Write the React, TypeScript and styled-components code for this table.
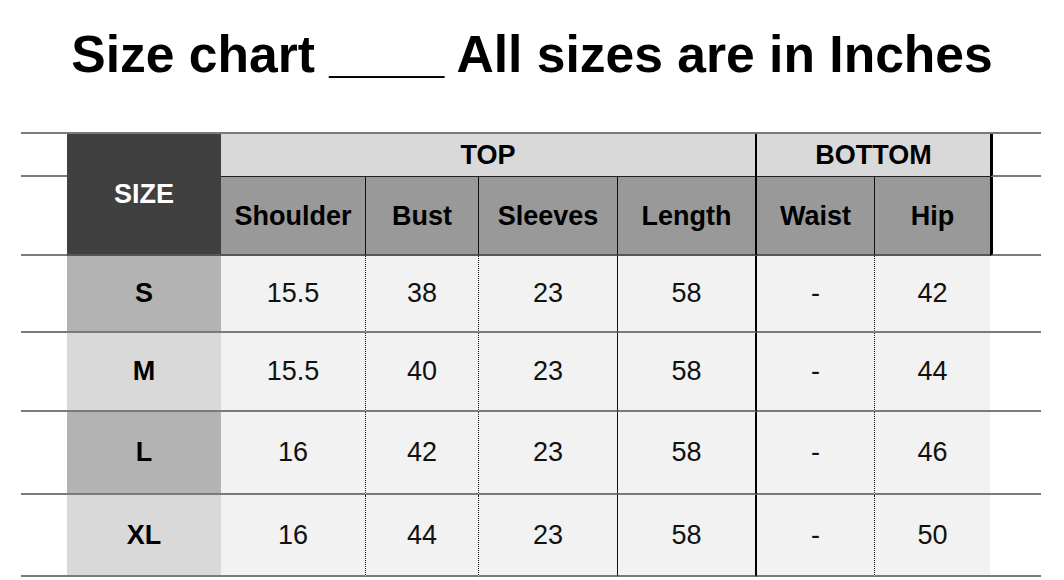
import * as React from "react";
import styled, { createGlobalStyle } from "styled-components";

const GlobalStyle = createGlobalStyle`
  html, body {
    margin: 0;
    padding: 0;
    background: #ffffff;
  }
  body {
    font-family: "Liberation Sans", Arial, sans-serif;
    color: #000;
  }
`;

type Divider = "dotted" | "thin" | "thick" | "heavy" | "none";

const dividers: Record<Divider, string> = {
  dotted: "1px dotted #111",
  thin: "1px solid #111",
  thick: "2px solid #000",
  heavy: "3px solid #000",
  none: "0",
};

const Page = styled.div`
  width: 1064px;
  height: 580px;
  overflow: hidden;
`;

const Title = styled.h1`
  margin: 24px 0 48px;
  height: 60px;
  line-height: 60px;
  text-align: center;
  font-size: 51.6px;
  font-weight: 700;
  white-space: nowrap;
`;

const Chart = styled.div`
  margin-left: 21px;
  width: 1020px;
  display: grid;
  grid-template-columns: 46px 154px 145px 113px 139px 139px 118px 115px 51px;
  grid-template-rows: 43px 79px 77px 79px 83px 82px;
  border-top: 2px solid #7a7a7a;
  font-size: 27px;
`;

const Spacer = styled.div<{ $edge?: boolean }>`
  box-sizing: border-box;
  border-bottom: 2px solid #7a7a7a;
  border-left: ${(p) => (p.$edge ? "3px solid #000" : "0")};
`;

const SizeHead = styled.div`
  grid-row: span 2;
  box-sizing: border-box;
  background: #404040;
  color: #fff;
  font-weight: 700;
  display: flex;
  align-items: center;
  justify-content: center;
  border-bottom: 2px solid #555;
`;

const GroupHead = styled.div<{ $span: number; $divider: Divider }>`
  grid-column: span ${(p) => p.$span};
  box-sizing: border-box;
  background: #d9d9d9;
  font-weight: 700;
  display: flex;
  align-items: center;
  justify-content: center;
  border-bottom: 1px solid #222;
  border-right: ${(p) => dividers[p.$divider]};
`;

const ColHead = styled.div<{ $divider: Divider }>`
  box-sizing: border-box;
  background: #999999;
  font-weight: 700;
  display: flex;
  align-items: center;
  justify-content: center;
  padding-top: 2px;
  border-bottom: 2px solid #555;
  border-right: ${(p) => dividers[p.$divider]};
`;

const SizeCell = styled.div<{ $dark: boolean }>`
  box-sizing: border-box;
  background: ${(p) => (p.$dark ? "#b3b3b3" : "#d9d9d9")};
  font-weight: 700;
  display: flex;
  align-items: center;
  justify-content: center;
  border-bottom: 2px solid #7a7a7a;
`;

const DataCell = styled.div<{ $divider: Divider }>`
  box-sizing: border-box;
  background: #f2f2f2;
  color: #111;
  display: flex;
  align-items: center;
  justify-content: center;
  border-bottom: 2px solid #7a7a7a;
  border-right: ${(p) => dividers[p.$divider]};
`;

const columns: { label: string; divider: Divider; head: Divider }[] = [
  { label: "Shoulder", divider: "dotted", head: "thin" },
  { label: "Bust", divider: "dotted", head: "thin" },
  { label: "Sleeves", divider: "thin", head: "thin" },
  { label: "Length", divider: "thick", head: "thick" },
  { label: "Waist", divider: "dotted", head: "thin" },
  { label: "Hip", divider: "none", head: "none" },
];

const rows = [
  { size: "S", values: ["15.5", "38", "23", "58", "-", "42"] },
  { size: "M", values: ["15.5", "40", "23", "58", "-", "44"] },
  { size: "L", values: ["16", "42", "23", "58", "-", "46"] },
  { size: "XL", values: ["16", "44", "23", "58", "-", "50"] },
];

export default function App() {
  return (
    <Page>
      <GlobalStyle />
      <Title>Size chart ____ All sizes are in Inches</Title>
      <Chart>
        <Spacer />
        <SizeHead>SIZE</SizeHead>
        <GroupHead $span={4} $divider="thick">TOP</GroupHead>
        <GroupHead $span={2} $divider="none">BOTTOM</GroupHead>
        <Spacer $edge />

        <Spacer />
        {columns.map((c) => (
          <ColHead key={c.label} $divider={c.head}>
            {c.label}
          </ColHead>
        ))}
        <Spacer $edge />

        {rows.map((r, i) => (
          <React.Fragment key={r.size}>
            <Spacer />
            <SizeCell $dark={i % 2 === 0}>{r.size}</SizeCell>
            {r.values.map((v, j) => (
              <DataCell key={j} $divider={columns[j].divider}>
                {v}
              </DataCell>
            ))}
            <Spacer />
          </React.Fragment>
        ))}
      </Chart>
    </Page>
  );
}
